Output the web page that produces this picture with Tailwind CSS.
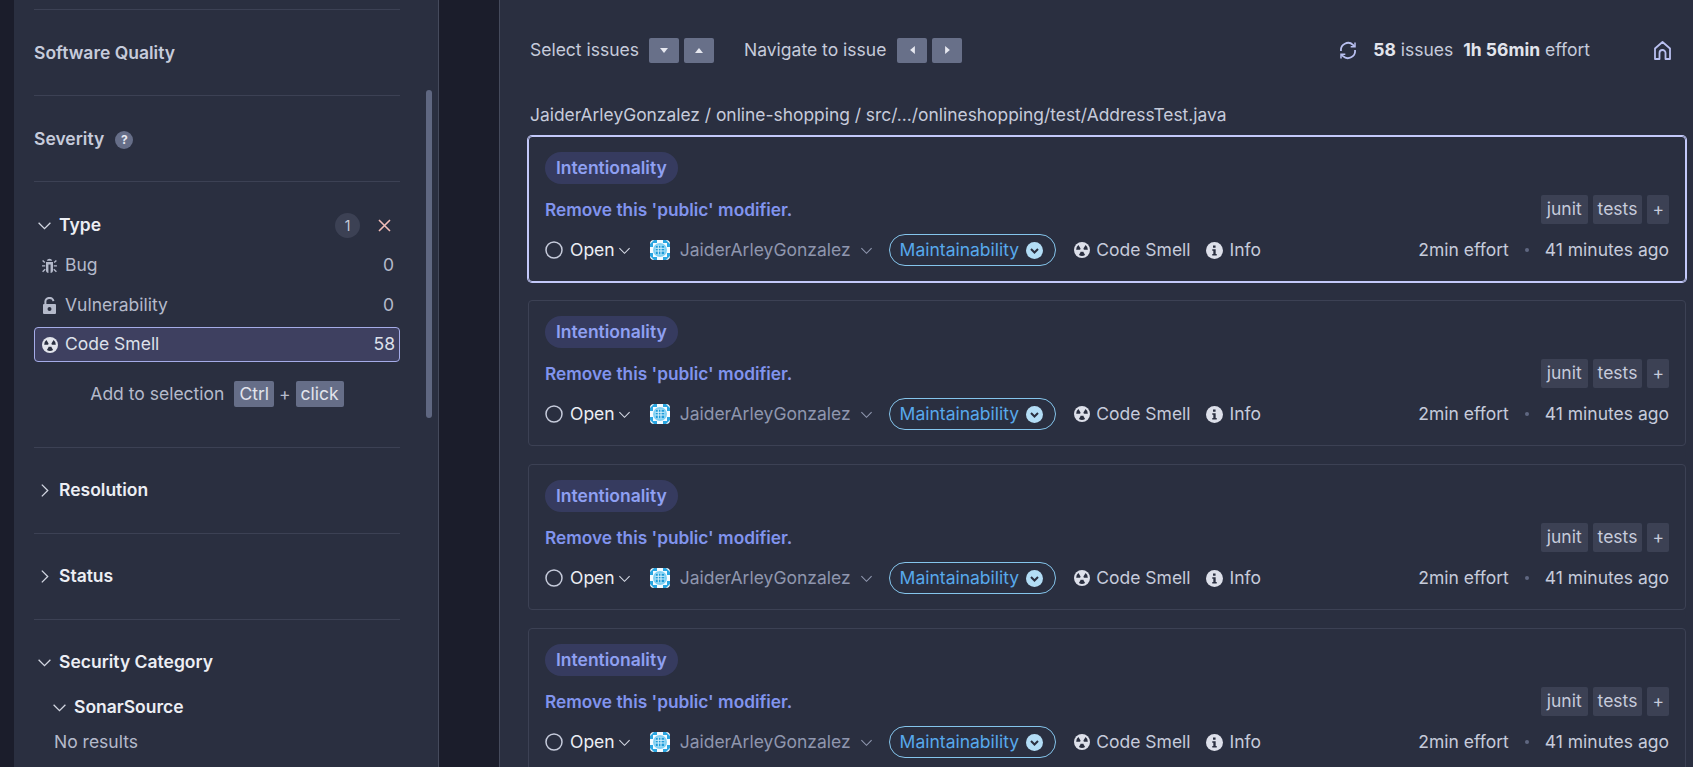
<!DOCTYPE html>
<html lang="en">
<head>
<meta charset="utf-8">
<script src="https://cdn.jsdelivr.net/npm/@tailwindcss/browser@4"></script>
<title>Issues</title>
</head>
<body class="bg-[#2a2f40] font-['Inter','Liberation_Sans',sans-serif] text-[17.5px] text-[#c6cbdb]">
<svg class="hidden">
  <symbol id="smell" viewBox="0 0 16 16"><circle cx="8" cy="8" r="8" fill="currentColor"/><path d="M6.600 6.600 4.400 3A5.600 5.600 0 0 0 2.200 7.700l4 .1a2 2 0 0 1 .4-1.200ZM9.400 6.600 11.600 3a5.600 5.600 0 0 1 2.200 4.700l-4 .1a2 2 0 0 0-.4-1.200ZM6.900 9.600 4.900 13a5.700 5.700 0 0 0 6.200 0l-2-3.400a2 2 0 0 1-2.200 0Z" fill="#2a2f40"/></symbol>
  <symbol id="down" viewBox="0 0 14 14"><path d="M1.500 4.500 7 10l5.500-5.500" fill="none" stroke="currentColor" stroke-width="1.200"/></symbol>
  <symbol id="right" viewBox="0 0 14 14"><path d="M4.500 1.500 10 7l-5.500 5.500" fill="none" stroke="currentColor" stroke-width="1.200"/></symbol>
  <symbol id="info" viewBox="0 0 16 16"><circle cx="8" cy="8" r="8" fill="currentColor"/><path d="M6.600 3.400h2.400v2H6.600ZM5.900 6.800h3.200v4.400h1v1.400H5.900v-1.400h1V8.200h-1Z" fill="#2a2f40"/></symbol>
  <symbol id="avatar" viewBox="0 0 20 20"><rect width="20" height="20" rx="4" fill="#f4fbff"/><path d="M0 4 4 0h3v3H3v4H0ZM13 0h3l4 4v3h-3V3h-4ZM0 13h3v4h4v3H4l-4-4ZM20 13h-3v4h-4v3h3l4-4Z" fill="#2aa5e0"/><circle cx="10" cy="10" r="7" fill="#7fd0f3"/><path d="M6 6h8v8H6Z" fill="#1f9bd8"/><path d="M8.300 5.500v9M11 5.500v9M5.500 8.300h9M5.500 11h9" stroke="#d8f2fd" stroke-width="1"/></symbol>
</svg>
<div class="flex h-[767px] w-full overflow-hidden">
  <div class="w-[14px] shrink-0 bg-[#1b1d2b]"></div>
  <aside class="relative w-[425px] shrink-0 border-r border-[#454a5c] bg-[#2a2f40] px-5 pt-[9px]">
    <div class="flex h-[86px] w-[366px] items-center border-t border-[#3c4154] pt-[2px] font-semibold text-[#c6cbdb]">Software Quality</div>
    <div class="flex h-[86px] w-[366px] items-center gap-[11px] border-t border-[#3c4154] pt-[2px] font-semibold text-[#c6cbdb]">
      Severity
      <span class="flex h-[18px] w-[18px] items-center justify-center rounded-full bg-[#666e88] text-[12px] font-bold text-[#e6e8f0]">?</span>
    </div>
    <div class="h-[266px] w-[366px] border-t border-[#3c4154] pt-[29px]">
      <div class="flex h-7 items-center">
        <svg class="ml-[3px] mr-[7px] h-[15px] w-[15px] text-[#d3d7e2]"><use href="#down"/></svg>
        <span class="font-semibold text-[#eceef4]">Type</span>
        <span class="ml-auto flex h-[25px] w-[25px] items-center justify-center rounded-full bg-[#3c4154] text-[14px]">1</span>
        <svg class="ml-[18px] mr-[9px] h-[13px] w-[13px] text-[#f2bdb8]" viewBox="0 0 13 13"><path d="M1 1l11 11M12 1 1 12" stroke="currentColor" stroke-width="1.600"/></svg>
      </div>
      <div class="mt-[6px] flex h-10 items-center pl-[7px] pr-[6px]">
        <svg class="mr-[7px] h-[17px] w-[17px] text-[#b5bacb]" viewBox="0 0 16 16"><path fill="currentColor" d="M5.400 3.600a2.700 2.700 0 0 1 5.200 0ZM4.700 4.600h6.600v8c0 1.200-1 2.200-2.300 2.400V7H7v8c-1.300-.2-2.300-1.200-2.300-2.400Z"/><path d="M3.600 5.200 1.500 3.200M12.400 5.200l2.100-2M4 8.400H1M12 8.400h3M4 11.500l-2.500 2.400M12 11.500l2.500 2.400" stroke="currentColor" stroke-width="1.300" fill="none"/></svg>
        <span class="text-[#b5bacb]">Bug</span><span class="ml-auto text-[#b5bacb]">0</span>
      </div>
      <div class="flex h-10 items-center pl-2 pr-[6px]">
        <svg class="mr-[8px] h-[17px] w-[15px] text-[#b5bacb]" viewBox="0 0 15 17"><path fill="currentColor" fill-rule="evenodd" d="M2 7h11a1 1 0 0 1 1 1v8a1 1 0 0 1-1 1H2a1 1 0 0 1-1-1V8a1 1 0 0 1 1-1Zm5.500 3a2 2 0 1 0 0 4 2 2 0 0 0 0-4Z"/><path d="M3.400 7V4.300a4 3.300 0 0 1 8-.2" fill="none" stroke="currentColor" stroke-width="2"/></svg>
        <span class="text-[#b5bacb]">Vulnerability</span><span class="ml-auto text-[#b5bacb]">0</span>
      </div>
      <div class="mt-[2px] flex h-[35px] items-center rounded-[4px] border border-[#a5ace8] bg-[#3e4060] pl-[7px] pr-[4px] text-[#dde0ea]">
        <svg class="mr-[7px] h-[16px] w-[16px] text-[#e2e4ec]"><use href="#smell"/></svg>
        <span>Code Smell</span><span class="ml-auto">58</span>
      </div>
      <div class="mt-[18px] flex h-7 items-center justify-center text-[#b5bacb]">
        Add to selection
        <span class="ml-[10px] rounded-[2px] bg-[#666e88] px-[5px] text-[#e2e4ec]">Ctrl</span>
        <span class="mx-[5px]">+</span>
        <span class="rounded-[2px] bg-[#666e88] px-[5px] text-[#e2e4ec]">click</span>
      </div>
    </div>
    <div class="flex h-[86px] w-[366px] items-center border-t border-[#3c4154] font-semibold text-[#eceef4]">
      <svg class="ml-[3px] mr-[7px] h-[15px] w-[15px] text-[#d3d7e2]"><use href="#right"/></svg>Resolution
    </div>
    <div class="flex h-[86px] w-[366px] items-center border-t border-[#3c4154] font-semibold text-[#eceef4]">
      <svg class="ml-[3px] mr-[7px] h-[15px] w-[15px] text-[#d3d7e2]"><use href="#right"/></svg>Status
    </div>
    <div class="w-[366px] border-t border-[#3c4154] pt-[28px]">
      <div class="flex h-7 items-center font-semibold text-[#eceef4]">
        <svg class="ml-[3px] mr-[7px] h-[15px] w-[15px] text-[#d3d7e2]"><use href="#down"/></svg>Security Category
      </div>
      <div class="mt-[17px] flex h-7 items-center pl-[18px] font-semibold text-[#eceef4]">
        <svg class="mr-[7px] h-[15px] w-[15px] text-[#d3d7e2]"><use href="#down"/></svg>SonarSource
      </div>
      <div class="mt-[7px] h-7 pl-[20px] leading-7 text-[#b5bacb]">No results</div>
    </div>
    <div class="absolute left-[412px] top-[90px] h-[328px] w-[6px] rounded-full bg-[#5f6781]"></div>
  </aside>
  <div class="w-[61px] shrink-0 border-r border-[#454a5c] bg-[#1b1d2b]"></div>
  <main class="min-w-0 flex-1 pl-[28px] pr-[7px]">
    <div class="flex h-[100px] items-center pl-[2px]">
      <span>Select issues</span>
      <span class="ml-[10px] flex h-[25px] w-[30px] items-center justify-center rounded-[2px] bg-[#687089]"><svg class="h-[5px] w-[8px]" viewBox="0 0 10 6"><path d="M0 0h10L5 6Z" fill="#e6e8f0"/></svg></span>
      <span class="ml-[5px] flex h-[25px] w-[30px] items-center justify-center rounded-[2px] bg-[#687089]"><svg class="h-[5px] w-[8px]" viewBox="0 0 10 6"><path d="M0 6h10L5 0Z" fill="#e6e8f0"/></svg></span>
      <span class="ml-[30px]">Navigate to issue</span>
      <span class="ml-[11px] flex h-[25px] w-[30px] items-center justify-center rounded-[2px] bg-[#687089]"><svg class="h-[8px] w-[5px]" viewBox="0 0 6 10"><path d="M6 0v10L0 5Z" fill="#e6e8f0"/></svg></span>
      <span class="ml-[5px] flex h-[25px] w-[30px] items-center justify-center rounded-[2px] bg-[#687089]"><svg class="h-[8px] w-[5px]" viewBox="0 0 6 10"><path d="M0 0v10l6-5Z" fill="#e6e8f0"/></svg></span>
      <svg class="ml-auto h-[19px] w-[18px] text-[#b9c0f0]" viewBox="0 0 18 19" fill="none" stroke="currentColor" stroke-width="1.800"><path d="M2 10a7.200 7.200 0 0 1 12-6.200l1.500 1.500"/><path d="M16 9a7.200 7.200 0 0 1-12 6.200l-1.500-1.500"/><path d="M16 1.500v4.300h-4.300M2 17.500v-4.300h4.300" stroke-width="1.500"/></svg>
      <span class="ml-[16px]"><b class="font-bold text-[#e2e4ec]">58</b> issues</span>
      <span class="ml-[10px]"><b class="font-bold text-[#e2e4ec]">1h 56min</b> effort</span>
      <svg class="ml-[63px] mr-[14px] h-[19px] w-[19px] text-[#b9c0f0]" viewBox="0 0 19 19" fill="none" stroke="currentColor" stroke-width="1.800"><path d="M2 18V7.500L9.500 1 17 7.500V18h-4.500v-6a3 3 0 0 0-6 0v6Z" stroke-linejoin="round"/></svg>
    </div>
    <div class="flex h-[30px] items-center pl-[2px] text-[17.4px]">JaiderArleyGonzalez / online-shopping / src/.../onlineshopping/test/AddressTest.java</div>

    <div class="mt-[6px] h-[146px] rounded-[4px] border border-[#c3c9fa] px-[16px] pt-[15px] ring-1 ring-[#c3c9fa]">
      <div class="flex h-[32px]"><span class="flex items-center rounded-full bg-[#363b5f] px-[11px] font-semibold text-[#8fa0f2]">Intentionality</span></div>
      <div class="mt-[11px] flex h-[30px] items-center justify-between">
        <span class="text-[17.3px] font-semibold text-[#8194ee]">Remove this 'public' modifier.</span>
        <span class="mb-[2px] flex gap-[5px]"><span class="flex h-[29px] items-center rounded-[2px] bg-[#3c4154] px-[6px]">junit</span><span class="flex h-[29px] items-center rounded-[2px] bg-[#3c4154] px-[5px]">tests</span><span class="flex h-[29px] items-center rounded-[2px] bg-[#3c4154] px-[5px]">+</span></span>
      </div>
      <div class="mt-[9px] flex h-[32px] items-center">
        <svg class="h-[18px] w-[18px] text-[#c6cbdb]" viewBox="0 0 18 18"><circle cx="9" cy="9" r="8" fill="none" stroke="currentColor" stroke-width="1.500"/></svg>
        <span class="ml-[7px] text-[#eceef4]">Open</span>
        <svg class="ml-[3px] h-[13px] w-[13px] text-[#d3d7e2]"><use href="#down"/></svg>
        <svg class="ml-[19px] h-5 w-5"><use href="#avatar"/></svg>
        <span class="ml-[10px] text-[#8f96ae]">JaiderArleyGonzalez</span>
        <svg class="ml-[9px] h-[13px] w-[13px] text-[#8f96ae]"><use href="#down"/></svg>
        <span class="ml-[16px] flex h-[32px] items-center rounded-full border border-[#85c5ec] pl-[10px] pr-[12px] text-[#58a9ec]">Maintainability<svg class="ml-[7px] h-[17px] w-[17px]" viewBox="0 0 17 17"><circle cx="8.500" cy="8.500" r="8.500" fill="#b3ddf6"/><path d="M5 7l3.500 3.500L12 7" fill="none" stroke="#2a2f40" stroke-width="2"/></svg></span>
        <svg class="ml-[18px] h-[16px] w-[16px] text-[#dde0ea]"><use href="#smell"/></svg>
        <span class="ml-[6px]">Code Smell</span>
        <svg class="ml-[15px] h-[17px] w-[17px] text-[#dde0ea]"><use href="#info"/></svg>
        <span class="ml-[7px]">Info</span>
        <span class="ml-auto">2min effort</span>
        <span class="mx-[16px] h-[4px] w-[4px] rounded-full bg-[#5f6781]"></span>
        <span>41 minutes ago</span>
      </div>
    </div>

    <div class="mt-[18px] h-[146px] rounded-[4px] border border-[#3c4154] px-[16px] pt-[15px]">
      <div class="flex h-[32px]"><span class="flex items-center rounded-full bg-[#363b5f] px-[11px] font-semibold text-[#8fa0f2]">Intentionality</span></div>
      <div class="mt-[11px] flex h-[30px] items-center justify-between">
        <span class="text-[17.3px] font-semibold text-[#8194ee]">Remove this 'public' modifier.</span>
        <span class="mb-[2px] flex gap-[5px]"><span class="flex h-[29px] items-center rounded-[2px] bg-[#3c4154] px-[6px]">junit</span><span class="flex h-[29px] items-center rounded-[2px] bg-[#3c4154] px-[5px]">tests</span><span class="flex h-[29px] items-center rounded-[2px] bg-[#3c4154] px-[5px]">+</span></span>
      </div>
      <div class="mt-[9px] flex h-[32px] items-center">
        <svg class="h-[18px] w-[18px] text-[#c6cbdb]" viewBox="0 0 18 18"><circle cx="9" cy="9" r="8" fill="none" stroke="currentColor" stroke-width="1.500"/></svg>
        <span class="ml-[7px] text-[#eceef4]">Open</span>
        <svg class="ml-[3px] h-[13px] w-[13px] text-[#d3d7e2]"><use href="#down"/></svg>
        <svg class="ml-[19px] h-5 w-5"><use href="#avatar"/></svg>
        <span class="ml-[10px] text-[#8f96ae]">JaiderArleyGonzalez</span>
        <svg class="ml-[9px] h-[13px] w-[13px] text-[#8f96ae]"><use href="#down"/></svg>
        <span class="ml-[16px] flex h-[32px] items-center rounded-full border border-[#85c5ec] pl-[10px] pr-[12px] text-[#58a9ec]">Maintainability<svg class="ml-[7px] h-[17px] w-[17px]" viewBox="0 0 17 17"><circle cx="8.500" cy="8.500" r="8.500" fill="#b3ddf6"/><path d="M5 7l3.500 3.500L12 7" fill="none" stroke="#2a2f40" stroke-width="2"/></svg></span>
        <svg class="ml-[18px] h-[16px] w-[16px] text-[#dde0ea]"><use href="#smell"/></svg>
        <span class="ml-[6px]">Code Smell</span>
        <svg class="ml-[15px] h-[17px] w-[17px] text-[#dde0ea]"><use href="#info"/></svg>
        <span class="ml-[7px]">Info</span>
        <span class="ml-auto">2min effort</span>
        <span class="mx-[16px] h-[4px] w-[4px] rounded-full bg-[#5f6781]"></span>
        <span>41 minutes ago</span>
      </div>
    </div>

    <div class="mt-[18px] h-[146px] rounded-[4px] border border-[#3c4154] px-[16px] pt-[15px]">
      <div class="flex h-[32px]"><span class="flex items-center rounded-full bg-[#363b5f] px-[11px] font-semibold text-[#8fa0f2]">Intentionality</span></div>
      <div class="mt-[11px] flex h-[30px] items-center justify-between">
        <span class="text-[17.3px] font-semibold text-[#8194ee]">Remove this 'public' modifier.</span>
        <span class="mb-[2px] flex gap-[5px]"><span class="flex h-[29px] items-center rounded-[2px] bg-[#3c4154] px-[6px]">junit</span><span class="flex h-[29px] items-center rounded-[2px] bg-[#3c4154] px-[5px]">tests</span><span class="flex h-[29px] items-center rounded-[2px] bg-[#3c4154] px-[5px]">+</span></span>
      </div>
      <div class="mt-[9px] flex h-[32px] items-center">
        <svg class="h-[18px] w-[18px] text-[#c6cbdb]" viewBox="0 0 18 18"><circle cx="9" cy="9" r="8" fill="none" stroke="currentColor" stroke-width="1.500"/></svg>
        <span class="ml-[7px] text-[#eceef4]">Open</span>
        <svg class="ml-[3px] h-[13px] w-[13px] text-[#d3d7e2]"><use href="#down"/></svg>
        <svg class="ml-[19px] h-5 w-5"><use href="#avatar"/></svg>
        <span class="ml-[10px] text-[#8f96ae]">JaiderArleyGonzalez</span>
        <svg class="ml-[9px] h-[13px] w-[13px] text-[#8f96ae]"><use href="#down"/></svg>
        <span class="ml-[16px] flex h-[32px] items-center rounded-full border border-[#85c5ec] pl-[10px] pr-[12px] text-[#58a9ec]">Maintainability<svg class="ml-[7px] h-[17px] w-[17px]" viewBox="0 0 17 17"><circle cx="8.500" cy="8.500" r="8.500" fill="#b3ddf6"/><path d="M5 7l3.500 3.500L12 7" fill="none" stroke="#2a2f40" stroke-width="2"/></svg></span>
        <svg class="ml-[18px] h-[16px] w-[16px] text-[#dde0ea]"><use href="#smell"/></svg>
        <span class="ml-[6px]">Code Smell</span>
        <svg class="ml-[15px] h-[17px] w-[17px] text-[#dde0ea]"><use href="#info"/></svg>
        <span class="ml-[7px]">Info</span>
        <span class="ml-auto">2min effort</span>
        <span class="mx-[16px] h-[4px] w-[4px] rounded-full bg-[#5f6781]"></span>
        <span>41 minutes ago</span>
      </div>
    </div>

    <div class="mt-[18px] h-[146px] rounded-[4px] border border-[#3c4154] px-[16px] pt-[15px]">
      <div class="flex h-[32px]"><span class="flex items-center rounded-full bg-[#363b5f] px-[11px] font-semibold text-[#8fa0f2]">Intentionality</span></div>
      <div class="mt-[11px] flex h-[30px] items-center justify-between">
        <span class="text-[17.3px] font-semibold text-[#8194ee]">Remove this 'public' modifier.</span>
        <span class="mb-[2px] flex gap-[5px]"><span class="flex h-[29px] items-center rounded-[2px] bg-[#3c4154] px-[6px]">junit</span><span class="flex h-[29px] items-center rounded-[2px] bg-[#3c4154] px-[5px]">tests</span><span class="flex h-[29px] items-center rounded-[2px] bg-[#3c4154] px-[5px]">+</span></span>
      </div>
      <div class="mt-[9px] flex h-[32px] items-center">
        <svg class="h-[18px] w-[18px] text-[#c6cbdb]" viewBox="0 0 18 18"><circle cx="9" cy="9" r="8" fill="none" stroke="currentColor" stroke-width="1.500"/></svg>
        <span class="ml-[7px] text-[#eceef4]">Open</span>
        <svg class="ml-[3px] h-[13px] w-[13px] text-[#d3d7e2]"><use href="#down"/></svg>
        <svg class="ml-[19px] h-5 w-5"><use href="#avatar"/></svg>
        <span class="ml-[10px] text-[#8f96ae]">JaiderArleyGonzalez</span>
        <svg class="ml-[9px] h-[13px] w-[13px] text-[#8f96ae]"><use href="#down"/></svg>
        <span class="ml-[16px] flex h-[32px] items-center rounded-full border border-[#85c5ec] pl-[10px] pr-[12px] text-[#58a9ec]">Maintainability<svg class="ml-[7px] h-[17px] w-[17px]" viewBox="0 0 17 17"><circle cx="8.500" cy="8.500" r="8.500" fill="#b3ddf6"/><path d="M5 7l3.500 3.500L12 7" fill="none" stroke="#2a2f40" stroke-width="2"/></svg></span>
        <svg class="ml-[18px] h-[16px] w-[16px] text-[#dde0ea]"><use href="#smell"/></svg>
        <span class="ml-[6px]">Code Smell</span>
        <svg class="ml-[15px] h-[17px] w-[17px] text-[#dde0ea]"><use href="#info"/></svg>
        <span class="ml-[7px]">Info</span>
        <span class="ml-auto">2min effort</span>
        <span class="mx-[16px] h-[4px] w-[4px] rounded-full bg-[#5f6781]"></span>
        <span>41 minutes ago</span>
      </div>
    </div>
  </main>
</div>
</body>
</html>
